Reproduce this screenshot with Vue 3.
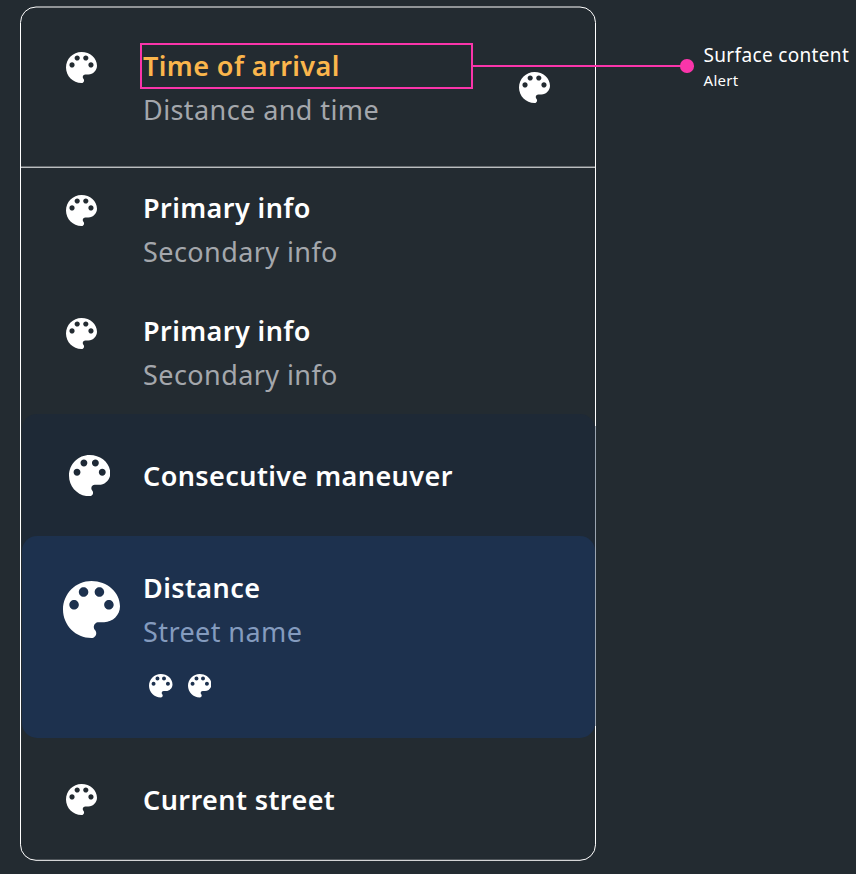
<script setup>
import { h } from 'vue'

const PALETTE =
  'M12 3c-4.97 0-9 4.03-9 9s4.03 9 9 9c.83 0 1.5-.67 1.5-1.5 0-.39-.15-.74-.39-1.01-.23-.26-.38-.61-.38-.99 0-.83.67-1.5 1.5-1.5H16c2.76 0 5-2.24 5-5 0-4.42-4.03-8-9-8zm-5.5 9c-.83 0-1.5-.67-1.5-1.5S5.67 9 6.5 9 8 9.67 8 10.5 7.33 12 6.5 12zm3-4C8.67 8 8 7.33 8 6.5S8.67 5 9.5 5s1.5.67 1.5 1.5S10.33 8 9.5 8zm5 0c-.83 0-1.5-.67-1.5-1.5S13.67 5 14.5 5s1.5.67 1.5 1.5S15.33 8 14.5 8zm3 4c-.83 0-1.5-.67-1.5-1.5S16.67 9 17.5 9s1.5.67 1.5 1.5-.67 1.5-1.5 1.5z'

const PaletteIcon = () =>
  h('svg', { viewBox: '3 3 18 18', 'aria-hidden': 'true' }, [h('path', { d: PALETTE, fill: '#fff' })])

const infoRows = [
  { id: 1, primary: 'Primary info', secondary: 'Secondary info' },
  { id: 2, primary: 'Primary info', secondary: 'Secondary info' },
]
</script>

<template>
  <main class="page">
    <section class="panel">
      <svg class="outline" viewBox="0 0 576 855" fill="none" aria-hidden="true">
        <rect x="0.5" y="1" width="575" height="853.3" rx="15.5" stroke="#fff" />
        <path d="M1 161.2H575" stroke="#fff" />
        <path d="M575.5 420V720" stroke="#9aa4b0" />
      </svg>

      <header class="row arrival">
        <PaletteIcon class="icon" />
        <div class="text">
          <p class="primary alert">Time of arrival</p>
          <p class="secondary">Distance and time</p>
        </div>
        <PaletteIcon class="icon trailing" />
      </header>

      <div v-for="row in infoRows" :key="row.id" class="row info">
        <PaletteIcon class="icon" />
        <div class="text">
          <p class="primary">{{ row.primary }}</p>
          <p class="secondary">{{ row.secondary }}</p>
        </div>
      </div>

      <div class="row consecutive">
        <PaletteIcon class="icon" />
        <p class="primary">Consecutive maneuver</p>
      </div>

      <div class="row maneuver">
        <PaletteIcon class="icon" />
        <div class="text">
          <p class="primary">Distance</p>
          <p class="secondary">Street name</p>
          <div class="lanes">
            <PaletteIcon class="lane" />
            <PaletteIcon class="lane" />
          </div>
        </div>
      </div>

      <footer class="row current">
        <PaletteIcon class="icon" />
        <p class="primary">Current street</p>
      </footer>
    </section>

    <div class="annotation">
      <span class="highlight"></span>
      <span class="leader"></span>
      <span class="dot"></span>
      <div class="label">
        <p class="label-title">Surface content</p>
        <p class="label-sub">Alert</p>
      </div>
    </div>
  </main>
</template>

<style>
body {
  background: #232b31;
}
</style>

<style scoped>
.page {
  position: relative;
  box-sizing: border-box;
  width: 856px;
  height: 874px;
  padding: 6px 0 0 20px;
  overflow: hidden;
  background: #232b31;
  color: #fff;
  font-family: 'Noto Sans', 'Open Sans', sans-serif;
}

p {
  margin: 0;
  white-space: nowrap;
}

.panel {
  position: relative;
  display: flex;
  flex-direction: column;
  width: 576px;
  height: 855px;
}

.outline {
  position: absolute;
  inset: 0;
  width: 576px;
  height: 855px;
}

.row {
  position: relative;
  display: flex;
  flex: none;
  align-items: flex-start;
  box-sizing: border-box;
  padding-left: 46px;
}

.icon {
  flex: none;
  width: 31px;
  height: 31px;
  margin-right: 46px;
}

.primary,
.secondary {
  font-size: 27px;
  line-height: 44px;
  letter-spacing: 0.42px;
}

.primary {
  font-weight: 600;
}

.secondary {
  color: #a4a7ac;
}

.alert {
  color: #fbb64c;
}

.arrival {
  height: 161px;
  padding-top: 38px;
}

.arrival .icon {
  margin-top: 8.4px;
}

.arrival .trailing {
  margin: 27.6px 46px 0 auto;
}

.info {
  height: 123px;
  padding-top: 19px;
}

.info .icon {
  margin-top: 8.6px;
}

.consecutive {
  width: 573px;
  height: 146px;
  margin: 1px 0 0 2px;
  padding: 40px 0 0 47px;
  border-radius: 15px;
  background: #1e2936;
}

.consecutive .icon {
  width: 41.3px;
  height: 41.3px;
  margin: 0.6px 32.7px 0 0;
}

.maneuver {
  width: 573px;
  height: 202px;
  margin: -24px 0 0 2px;
  padding: 30px 0 0 41px;
  border-radius: 15px;
  background: #1d314e;
}

.maneuver .icon {
  width: 57px;
  height: 57px;
  margin: 15px 23px 0 0;
}

.maneuver .secondary {
  color: #849bbe;
}

.lanes {
  display: flex;
  gap: 15px;
  padding: 20px 0 0 6.4px;
}

.lane {
  width: 23.5px;
  height: 23.5px;
}

.current {
  align-items: center;
  height: 123px;
}

.annotation {
  position: absolute;
  top: 43px;
  left: 140px;
  display: flex;
  align-items: center;
  height: 46px;
}

.highlight {
  box-sizing: border-box;
  width: 333px;
  height: 46px;
  border: 2px solid #fa35aa;
}

.leader {
  width: 208px;
  height: 2px;
  background: #fa35aa;
}

.dot {
  width: 13.5px;
  height: 13.5px;
  margin-left: -1px;
  border-radius: 50%;
  background: #fa35aa;
}

.label {
  margin: 2px 0 0 10px;
}

.label-title {
  font-size: 19px;
  line-height: 26px;
  letter-spacing: 0.34px;
}

.label-sub {
  font-size: 15px;
  line-height: 24px;
  letter-spacing: 0.3px;
}
</style>
